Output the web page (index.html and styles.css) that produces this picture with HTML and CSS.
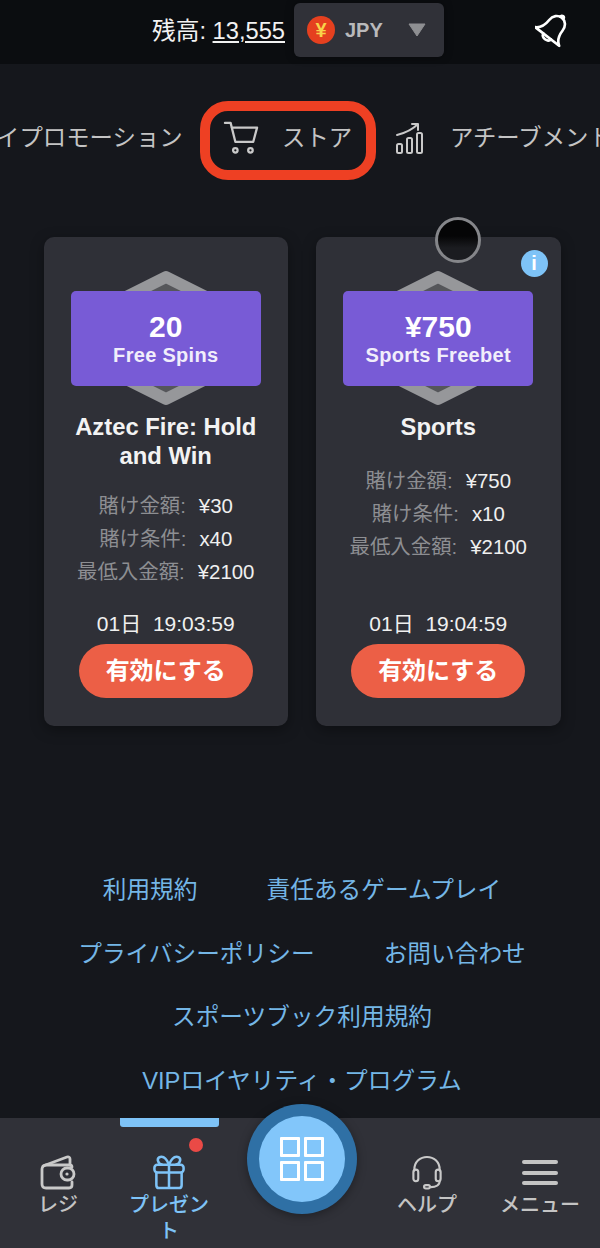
FILE: index.html
```html
<!DOCTYPE html>
<html lang="ja">
<head>
  <meta charset="UTF-8">
  <title>ストア</title>
  <link rel="stylesheet" href="styles.css">
</head>
<body>

  <header class="top">
    <div class="balance">残高: <u>13,555</u></div>
    <div class="currency">
      <span class="coin">¥</span>
      <span class="code">JPY</span>
      <svg class="caret" width="18" height="14" viewBox="0 0 18 14"><path d="M1 1h16L9 13z" fill="#8e8f92" stroke="#8e8f92" stroke-linejoin="round"/></svg>
    </div>
    <svg class="bell" width="36" height="38" viewBox="0 0 38 40" fill="none" stroke="#fff" stroke-width="2.8" stroke-linejoin="round" stroke-linecap="round">
      <g transform="rotate(38 19 20)">
        <path d="M3 30c5-3 7-8 7-15 0-6 4-10 9-10s9 4 9 10c0 7 2 12 7 15z"/>
        <path d="M17 5c0-3 4-3 4 0"/>
        <path d="M14 30c0 5 10 5 10 0"/>
      </g>
    </svg>
  </header>

  <!-- タブ -->
  <nav class="tabs">
    <div class="tab first"><span>イプロモーション</span></div>
    <div class="tab current">
      <svg width="38" height="34" viewBox="0 0 38 36" fill="none" stroke="#c9c9c9" stroke-width="2.4" stroke-linejoin="round" stroke-linecap="round">
        <path d="M2 2h6l5 20h19l4-15H9"/>
        <circle cx="13" cy="31" r="2.4"/>
        <circle cx="29" cy="31" r="2.4"/>
      </svg>
      <span>ストア</span>
    </div>
    <div class="tab">
      <svg width="30" height="32" viewBox="0 0 30 32" fill="none" stroke="#c9c9c9" stroke-width="2" stroke-linejoin="round" stroke-linecap="round">
        <path d="M2 13 C10 11 17 8 23 2M17 2h6v6"/>
        <rect x="2" y="22" width="5" height="9" rx="1.5"/>
        <rect x="12" y="16" width="5" height="15" rx="1.5"/>
        <rect x="22" y="11" width="5" height="20" rx="1.5"/>
      </svg>
      <span>アチーブメント</span>
    </div>
  </nav>

  <main class="cards">
    <section class="card">
      <div class="badge">
        <svg class="gem" width="190" height="136" viewBox="0 0 190 136">
          <path d="M95 7 155 37V99L95 129 35 99V37z" fill="#55565a" stroke="#96979a" stroke-width="12" stroke-linejoin="round"/>
        </svg>
        <div class="plate">
          <strong>20</strong>
          <span>Free Spins</span>
        </div>
      </div>
      <h3>Aztec Fire: Hold and Win</h3>
      <dl class="terms">
        <div><dt>賭け金額:</dt><dd>¥30</dd></div>
        <div><dt>賭け条件:</dt><dd>x40</dd></div>
        <div><dt>最低入金額:</dt><dd>¥2100</dd></div>
      </dl>
      <div class="timer">01日&nbsp;&nbsp;19:03:59</div>
      <button class="activate">有効にする</button>
    </section>

    <section class="card">
      <div class="ring"></div>
      <div class="info">i</div>
      <div class="badge">
        <svg class="gem" width="190" height="136" viewBox="0 0 190 136">
          <path d="M95 7 155 37V99L95 129 35 99V37z" fill="#55565a" stroke="#96979a" stroke-width="12" stroke-linejoin="round"/>
        </svg>
        <div class="plate">
          <strong>¥750</strong>
          <span>Sports Freebet</span>
        </div>
      </div>
      <h3>Sports</h3>
      <dl class="terms single">
        <div><dt>賭け金額:</dt><dd>¥750</dd></div>
        <div><dt>賭け条件:</dt><dd>x10</dd></div>
        <div><dt>最低入金額:</dt><dd>¥2100</dd></div>
      </dl>
      <div class="timer">01日&nbsp;&nbsp;19:04:59</div>
      <button class="activate">有効にする</button>
    </section>
  </main>

  <!-- リンク -->
  <footer class="links">
    <div class="link-row"><a>利用規約</a><a>責任あるゲームプレイ</a></div>
    <div class="link-row"><a>プライバシーポリシー</a><a>お問い合わせ</a></div>
    <div class="link-row"><a>スポーツブック利用規約</a></div>
    <div class="link-row"><a>VIPロイヤリティ・プログラム</a></div>
  </footer>

  <nav class="bottom">
    <div class="item">
      <svg width="36" height="35" viewBox="0 0 36 35" fill="none" stroke="#c9c9c9" stroke-width="2.8" stroke-linejoin="round" stroke-linecap="round">
        <path d="M3 11 27 2c2-.5 3 .5 3 2v6"/>
        <path d="M32 12c0-1-1-2-3-2H6c-2 0-4 2-4 4v15c0 3 2 4 4 4h23c2 0 3-1 3-3v-3"/>
        <rect x="21" y="13" width="13" height="12" rx="6"/>
        <circle cx="27" cy="19" r="1.6" fill="#c9c9c9" stroke="none"/>
      </svg>
      <span>レジ</span>
    </div>
    <div class="item active">
      <i class="marker"></i>
      <i class="dot"></i>
      <svg width="34" height="35" viewBox="0 0 34 36" fill="none" stroke="#7ec3f7" stroke-width="2.6" stroke-linejoin="round" stroke-linecap="round">
        <path d="M17 10C15 5 12 1 8 2 4 3 5 9 10 10M17 10c2-5 5-9 9-8 4 1 3 7-2 8"/>
        <rect x="2" y="10" width="30" height="8" rx="3"/>
        <path d="M4 18v13c0 2 1 3 3 3h20c2 0 3-1 3-3V18M17 10v24"/>
      </svg>
      <span>プレゼント</span>
    </div>
    <div class="item spacer"></div>
    <div class="item">
      <svg width="32" height="35" viewBox="0 0 32 36" fill="none" stroke="#c9c9c9" stroke-width="2.2" stroke-linecap="round" stroke-linejoin="round">
        <path d="M3 16V15C3 7 9 2 16 2s13 5 13 13v1"/>
        <rect x="2" y="15" width="5" height="12" rx="2.5"/>
        <rect x="25" y="15" width="5" height="12" rx="2.5"/>
        <path d="M29 27c0 4-4 6-9 6"/>
        <rect x="13" y="31" width="6" height="3.4" rx="1.7"/>
      </svg>
      <span>ヘルプ</span>
    </div>
    <div class="item">
      <div class="burger"><i></i><i></i><i></i></div>
      <span>メニュー</span>
    </div>
    <div class="home">
      <div class="home-inner">
        <i></i><i></i><i></i><i></i>
      </div>
    </div>
  </nav>

</body>
</html>
```

FILE: styles.css
```css
* {
  box-sizing: border-box;
}
html, body {
  margin: 0;
  height: 1248px;
  overflow: hidden;
}
body {
  font-family: "Liberation Sans", "Noto Sans CJK JP", sans-serif;
  background-color: #15171c;
  color: #fff;
  display: flex;
  flex-direction: column;
}

/* header */
.top {
  height: 64px;
  background-color: #0b0d10;
  display: flex;
  align-items: center;
  padding: 0 29px 4px 152px;
  flex: none;
}
.balance {
  font-size: 23.7px;
  color: #f2f2f2;
  white-space: nowrap;
  padding-bottom: 3px;
}
.currency {
  width: 150px;
  height: 54px;
  margin-left: 9px;
  background-color: #303138;
  border-radius: 6px;
  display: flex;
  align-items: center;
  padding-left: 13px;
  box-shadow: 0 0 8px rgba(0, 0, 0, 0.4);
}
.coin {
  width: 28px;
  height: 28px;
  border-radius: 50%;
  background-color: #e5401f;
  color: #f8d34a;
  font-size: 20px;
  font-weight: bold;
  text-align: center;
  line-height: 28px;
}
.code {
  margin-left: 10px;
  font-size: 20px;
  font-weight: bold;
  color: #b9b9bb;
}
.caret {
  margin-left: 25px;
}
.bell {
  margin-left: auto;
  margin-top: -2px;
}

/* tabs */
.tabs {
  flex: none;
  display: flex;
  align-items: center;
  height: 116px;
  padding-top: 37px;
  font-size: 23.4px;
  color: #c4c4c4;
  white-space: nowrap;
}
.tab {
  display: flex;
  align-items: center;
  flex: none;
  padding-bottom: 6px;
}
.tab span {
  padding-bottom: 4px;
}
.tab.first {
  margin-left: -4px;
  width: 204px;
}
.tab.current {
  width: 176px;
  height: 79px;
  border: 10px solid #ee4023;
  border-radius: 28px;
  padding-left: 12px;
  gap: 22px;
}
.tab:last-child {
  margin-left: 19px;
  gap: 25px;
}

/* cards */
.cards {
  flex: none;
  display: grid;
  grid-template-columns: 244.5px 244.5px;
  gap: 28px;
  padding: 57px 0 0 43.5px;
}
.card {
  position: relative;
  height: 489px;
  background-color: #2f3037;
  border-radius: 10px;
  box-shadow: 0 4px 14px rgba(0, 0, 0, 0.35);
  padding-top: 33px;
  display: flex;
  flex-direction: column;
  align-items: center;
}
.ring {
  position: absolute;
  top: -20px;
  left: 119px;
  width: 46px;
  height: 46px;
  border: 3.5px solid #85868a;
  border-radius: 50%;
  background: linear-gradient(#050506 40%, #1b1c20 70%);
}
.info {
  position: absolute;
  top: 13px;
  right: 13px;
  width: 27px;
  height: 27px;
  border-radius: 50%;
  background-color: #7ec3f7;
  color: #fff;
  font-size: 20px;
  font-weight: bold;
  line-height: 27px;
  text-align: center;
}
.badge {
  position: relative;
  width: 190px;
  height: 136px;
  display: flex;
  align-items: center;
  justify-content: center;
  flex: none;
}
.gem {
  position: absolute;
  left: 0;
  top: 0;
}
.plate {
  position: relative;
  width: 190px;
  height: 95px;
  margin-top: 1px;
  background-color: #785bd6;
  border-radius: 5px;
  display: flex;
  flex-direction: column;
  align-items: center;
  justify-content: center;
}
.plate strong {
  font-size: 30px;
  line-height: 34px;
}
.plate span {
  font-size: 20px;
  font-weight: bold;
  letter-spacing: 0.3px;
  color: #f1eefb;
  line-height: 23px;
}
.card h3 {
  margin: 6px 0 0;
  padding: 0 20px;
  font-size: 23.8px;
  line-height: 29px;
  text-align: center;
  color: #f3f3f3;
}
.terms {
  margin: 20px 0 0;
  font-size: 20.4px;
  line-height: 33px;
  flex: 1;
}
.terms.single {
  margin-top: 24px;
}
.terms div {
  display: flex;
  justify-content: center;
  gap: 13px;
}
.terms dt {
  color: #8d8e92;
}
.terms dd {
  margin: 0;
  color: #f0f0f0;
}
.timer {
  font-size: 21px;
  line-height: 24px;
  color: #f0f0f0;
  margin-bottom: 8px;
}
.activate {
  width: 174px;
  height: 54px;
  margin-bottom: 28px;
  padding: 0 0 5px;
  border: none;
  border-radius: 27px;
  background-color: #ec5f46;
  color: #fff;
  font-family: inherit;
  font-size: 24px;
  font-weight: bold;
}

/* links */
.links {
  flex: none;
  padding-top: 132px;
  font-size: 23.7px;
  color: #74b6e6;
  padding-left: 4px;
}
.link-row {
  height: 63.6px;
  display: flex;
  justify-content: center;
  gap: 69px;
  line-height: 64px;
  white-space: nowrap;
}

/* bottom nav */
.bottom {
  position: absolute;
  left: 0;
  right: 0;
  bottom: 0;
  height: 130px;
  background-color: #303138;
  display: grid;
  grid-template-columns: 116px 106px 150px 110px 116px;
  padding-top: 37px;
  font-size: 20px;
  font-weight: 500;
  color: #c4c4c4;
}
.item {
  position: relative;
  display: flex;
  flex-direction: column;
  align-items: center;
  text-align: center;
  line-height: 26px;
}
.item span {
  margin-top: 1.5px;
}
.item svg {
  flex: none;
}
.item.active {
  color: #7ec3f7;
  padding: 0 10px;
}
.marker {
  position: absolute;
  top: -37px;
  left: 4px;
  width: 99px;
  height: 9px;
  background-color: #7ec3f7;
  border-radius: 0 0 3px 3px;
}
.dot {
  position: absolute;
  top: -17px;
  left: 73px;
  width: 14px;
  height: 14px;
  background-color: #ea4a46;
  border-radius: 50%;
}
.burger {
  width: 36px;
  height: 35px;
  display: flex;
  flex-direction: column;
  gap: 6.5px;
  padding-top: 5px;
}
.burger i {
  display: block;
  height: 4px;
  border-radius: 2px;
  background-color: #c4c4c4;
}
.home {
  position: absolute;
  left: 247px;
  top: -14px;
  width: 110px;
  height: 110px;
  border-radius: 50%;
  background-color: #2f70a5;
  box-shadow: 0 2px 10px rgba(0, 0, 0, 0.35);
  display: flex;
  align-items: center;
  justify-content: center;
}
.home-inner {
  width: 86px;
  height: 86px;
  border-radius: 50%;
  background-color: #82c6fa;
  display: grid;
  grid-template-columns: 20px 20px;
  grid-template-rows: 20px 20px;
  gap: 4px;
  justify-content: center;
  align-content: center;
}
.home-inner i {
  border: 3.5px solid #fff;
  border-radius: 1px;
}
```
